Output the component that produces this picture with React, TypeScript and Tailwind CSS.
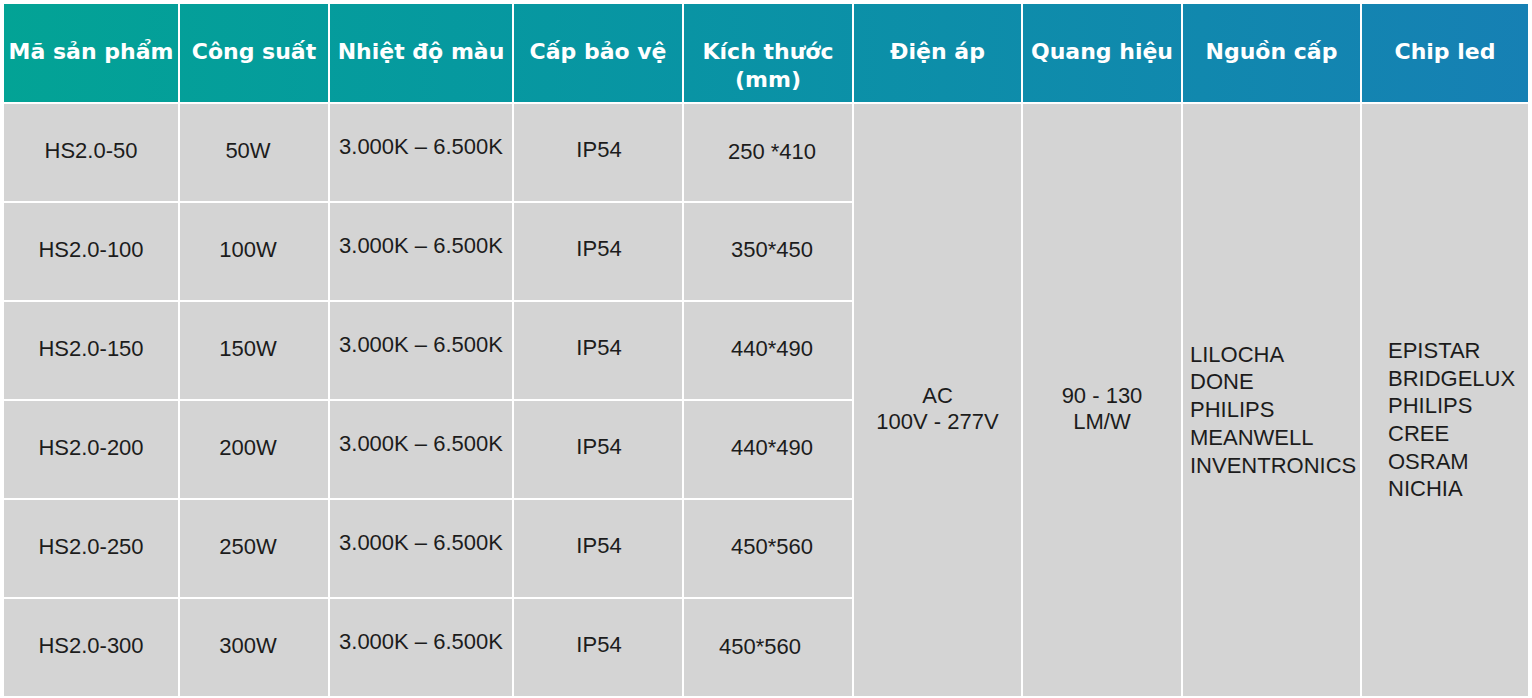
import React from "react";

const headers = [
  "Mã sản phẩm",
  "Công suất",
  "Nhiệt độ màu",
  "Cấp bảo vệ",
  "Kích thước\n(mm)",
  "Điện áp",
  "Quang hiệu",
  "Nguồn cấp",
  "Chip led",
];

const rows = [
  { code: "HS2.0-50", power: "50W", size: "250 *410", sizeCls: "pl-[8px] pb-[2px]" },
  { code: "HS2.0-100", power: "100W", size: "350*450", sizeCls: "pl-[8px] pb-[4px]" },
  { code: "HS2.0-150", power: "150W", size: "440*490", sizeCls: "pl-[8px] pb-[4px]" },
  { code: "HS2.0-200", power: "200W", size: "440*490", sizeCls: "pl-[8px] pb-[4px]" },
  { code: "HS2.0-250", power: "250W", size: "450*560", sizeCls: "pl-[8px] pb-[4px]" },
  { code: "HS2.0-300", power: "300W", size: "450*560", sizeCls: "pr-[16px] pb-[2px]" },
];

const sources = ["LILOCHA", "DONE", "PHILIPS", "MEANWELL", "INVENTRONICS"];
const chips = ["EPISTAR", "BRIDGELUX", "PHILIPS", "CREE", "OSRAM", "NICHIA"];

const cell =
  "bg-[#d4d4d4] flex items-center justify-center text-[22px] text-[#1c1c1c] font-['Liberation_Sans',Arial,sans-serif]";

export default function App() {
  return (
    <div className="w-[1532px] h-[698px] overflow-hidden bg-white pl-[4px] pt-[4px]">
      <div className="grid grid-cols-[174px_148px_182px_168px_168px_167px_158px_177px_166px] grid-rows-[98px_repeat(6,97px)] gap-[2px]">
        {/* Header */}
        {headers.map((h) => (
          <div
            key={h}
            className="bg-linear-to-r from-[#03a395] to-[#1680b4] bg-fixed px-1 pt-[34px] text-center text-white font-bold text-[22px] leading-[28px] whitespace-pre-line font-['DejaVu_Sans',sans-serif]"
          >
            {h}
          </div>
        ))}

        {rows.map((r, i) => (
          <React.Fragment key={r.code}>
            <div className={`${cell} pb-[4px]`}>{r.code}</div>
            <div className={`${cell} pr-[12px] pb-[4px]`}>{r.power}</div>
            <div className={`${cell} pb-[12px]`}>3.000K – 6.500K</div>
            <div className={`${cell} pb-[6px] pl-[2px]`}>IP54</div>
            <div className={`${cell} ${r.sizeCls}`}>{r.size}</div>
            {i === 0 && (
              <>
                <div className={`${cell} row-span-6 flex-col pt-[18px] leading-[26px]`}>
                  <span>AC</span>
                  <span>100V - 277V</span>
                </div>
                <div className={`${cell} row-span-6 flex-col pt-[18px] leading-[26px]`}>
                  <span>90 - 130</span>
                  <span>LM/W</span>
                </div>
                <div className={`${cell} row-span-6 flex-col !items-start pl-[7px] pt-[20px] leading-[27.7px]`}>
                  {sources.map((s) => (
                    <span key={s}>{s}</span>
                  ))}
                </div>
                <div className={`${cell} row-span-6 flex-col !items-start pl-[26px] pt-[40px] leading-[27.6px]`}>
                  {chips.map((c) => (
                    <span key={c}>{c}</span>
                  ))}
                </div>
              </>
            )}
          </React.Fragment>
        ))}
      </div>
    </div>
  );
}
